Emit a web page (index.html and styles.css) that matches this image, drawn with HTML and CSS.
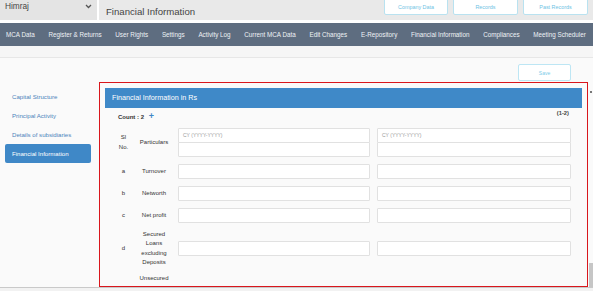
FILE: index.html
```
<!DOCTYPE html>
<html lang="en">
<head>
    <meta charset="UTF-8">
    <title>Financial Information</title>
    <link rel="stylesheet" href="styles.css">
</head>
<body>
    <div class="top">
        <div class="picker">
            <span>Himraj</span>
            <svg class="chev" width="7" height="5" viewBox="0 0 7 5"><polyline points="1,1 3.5,3.5 6,1" fill="none" stroke="#555" stroke-width="1.3"/></svg>
        </div>
        <div class="title">
            <span class="title-text">Financial Information</span>
            <div class="tabs">
                <a class="tab">Company Data</a>
                <a class="tab">Records</a>
                <a class="tab">Past Records</a>
            </div>
        </div>
    </div>

    <nav class="menu">
        <a>MCA Data</a>
        <a>Register &amp; Returns</a>
        <a>User Rights</a>
        <a>Settings</a>
        <a>Activity Log</a>
        <a>Current MCA Data</a>
        <a>Edit Changes</a>
        <a>E-Repository</a>
        <a>Financial Information</a>
        <a>Compliances</a>
        <a>Meeting Scheduler</a>
    </nav>
    <div class="band"></div>

    <div class="main">
        <aside class="side">
            <a class="side-link">Capital Structure</a>
            <a class="side-link">Principal Activity</a>
            <a class="side-link">Details of subsidiaries</a>
            <a class="side-link active">Financial Information</a>
        </aside>

        <section class="content">
            <div class="save-row">
                <button class="save">Save</button>
            </div>
            <div class="frame">
                <div class="panel-head">Financial Information in Rs</div>
                <div class="count-row">
                    <span class="count">Count : 2 <b class="plus">+</b></span>
                    <span class="range">(1-2)</span>
                </div>
                <div class="grid">
                    <div class="cell num">Sl<br>No.</div>
                    <div class="cell label">Particulars</div>
                    <div class="cell">
                        <div class="box hint">CY (YYYY-YYYY)</div>
                        <div class="box stacked"></div>
                    </div>
                    <div class="cell right">
                        <div class="box hint">CY (YYYY-YYYY)</div>
                        <div class="box stacked"></div>
                    </div>

                    <div class="cell num">a</div>
                    <div class="cell label">Turnover</div>
                    <div class="cell"><div class="box"></div></div>
                    <div class="cell right"><div class="box"></div></div>

                    <div class="cell num">b</div>
                    <div class="cell label">Networth</div>
                    <div class="cell"><div class="box"></div></div>
                    <div class="cell right"><div class="box"></div></div>

                    <div class="cell num">c</div>
                    <div class="cell label">Net profit</div>
                    <div class="cell"><div class="box"></div></div>
                    <div class="cell right"><div class="box"></div></div>

                    <div class="cell num">d</div>
                    <div class="cell label">Secured<br>Loans<br>excluding<br>Deposits</div>
                    <div class="cell"><div class="box"></div></div>
                    <div class="cell right"><div class="box"></div></div>

                    <div class="cell num"></div>
                    <div class="cell label">Unsecured</div>
                    <div class="cell"></div>
                    <div class="cell right"></div>
                </div>
            </div>
        </section>

        <div class="vscroll">
            <span class="arrow"></span>
            <span class="thumb"></span>
        </div>
    </div>
    <div class="hscroll"></div>
</body>
</html>
```

FILE: styles.css
```
* {
    box-sizing: border-box;
}
html, body {
    margin: 0;
    height: 291px;
    overflow: hidden;
}
body {
    background: #fff;
    font-family: "Liberation Sans", Arial, sans-serif;
    color: #333;
}

/* top strip */
.top {
    display: flex;
    height: 20px;
    margin-bottom: 3px;
}
.picker {
    width: 97px;
    background: #e4e4e4;
    position: relative;
    padding: 0 0 0 5px;
    font-size: 8.3px;
    line-height: 12px;
    color: #444;
}
.chev {
    position: absolute;
    left: 85px;
    top: 4px;
}
.title {
    flex: 1;
    margin-left: 2px;
    background: #e9e9e9;
    display: flex;
    padding: 0 5px 0 7px;
}
.title-text {
    font-size: 9.6px;
    line-height: 24px;
    color: #444;
}
.tabs {
    margin-left: auto;
    display: flex;
    gap: 5px;
    margin-top: -3px;
}
.tab {
    width: 65px;
    height: 18px;
    background: #fff;
    border: 1px solid #b9e2f0;
    border-radius: 2px;
    color: #6fc3e4;
    font-size: 5.4px;
    line-height: 18px;
    text-align: center;
}
.tab:first-child {
    width: 64px;
}

/* menu */
.menu {
    height: 23px;
    background: #5e6d80;
    display: flex;
    justify-content: space-between;
    align-items: center;
    padding: 0 7px 0 6px;
}
.menu a {
    color: #eef2f6;
    font-size: 6.3px;
    white-space: nowrap;
}
.band {
    height: 12px;
    background: #f6f6f6;
    border-bottom: 1px solid #e7e7e7;
}

/* main */
.main {
    display: flex;
    height: 229px;
    background: #fafafa;
}
.side {
    width: 99px;
    padding-top: 29px;
}
.side-link {
    display: block;
    width: 86px;
    height: 19px;
    margin-left: 5px;
    padding-left: 7px;
    font-size: 6.1px;
    line-height: 19px;
    color: #4d84bb;
}
.side-link.active {
    background: #3f88c7;
    color: #fff;
    border-radius: 2px;
}
.content {
    width: 489px;
}
.save-row {
    height: 24px;
    display: flex;
    justify-content: flex-end;
    padding: 6px 17px 0 0;
}
.save {
    width: 53px;
    height: 17px;
    background: #fff;
    border: 1px solid #bde6f4;
    border-radius: 2px;
    color: #7ccbe8;
    font-family: inherit;
    font-size: 5px;
    padding: 0;
}
.frame {
    height: 205px;
    border: 1px solid #d9161c;
    padding: 5px 5px 0 5px;
    overflow: hidden;
}
.panel-head {
    height: 20px;
    background: #3f89c8;
    color: #fff;
    font-size: 7.2px;
    line-height: 19px;
    padding-left: 7px;
}
.count-row {
    height: 20px;
    position: relative;
}
.count {
    position: absolute;
    left: 13px;
    top: 5px;
    font-size: 6px;
    font-weight: bold;
    color: #333;
    line-height: 6px;
}
.plus {
    color: #3f88c7;
    font-size: 9px;
    margin-left: 3px;
}
.range {
    position: absolute;
    right: 13px;
    top: 2px;
    font-size: 5.8px;
    font-weight: bold;
    color: #444;
}

/* table */
.grid {
    display: grid;
    grid-template-columns: 27px 41px 192px 201px;
    row-gap: 7px;
    margin-left: 5px;
}
.cell {
    display: flex;
    flex-direction: column;
    justify-content: center;
}
.cell.right {
    padding-left: 7px;
}
.num, .label {
    text-align: center;
    font-size: 6px;
    line-height: 9.3px;
    color: #333;
}
.label {
    padding-right: 7px;
}
.box {
    height: 15px;
    background: #fff;
    border: 1px solid #e1e1e1;
    border-radius: 1px;
}
.box.stacked {
    margin-top: -1px;
}
.hint {
    font-size: 5px;
    color: #9a9a9a;
    line-height: 13px;
    padding-left: 4px;
}

/* fake scrollbars */
.vscroll {
    width: 5px;
    position: relative;
}
.arrow {
    position: absolute;
    top: 33px;
    left: 2px;
    width: 2px;
    height: 2px;
    background: #777;
}
.thumb {
    position: absolute;
    bottom: 0;
    left: 1px;
    width: 4px;
    height: 24px;
    background: #c6c6c6;
}
.hscroll {
    height: 4px;
    border-top: 1px solid #c9c9c9;
    background: #f2f2f2;
}
```
